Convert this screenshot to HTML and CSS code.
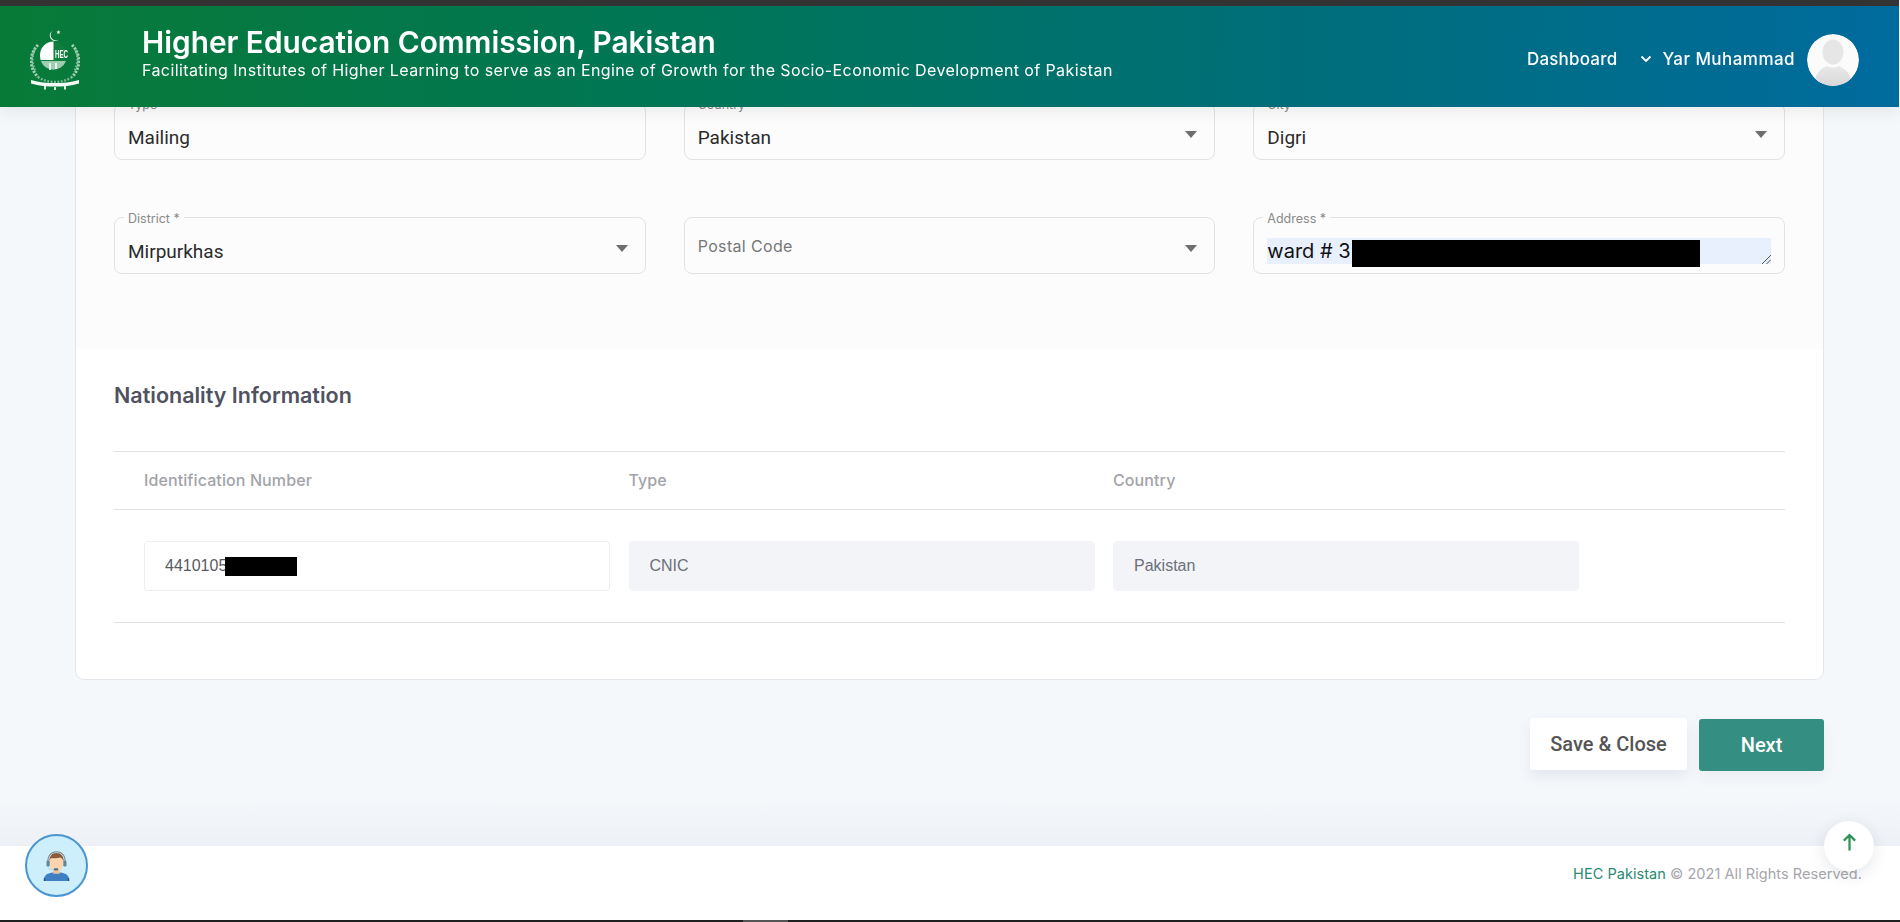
FILE: index.html
```html
<!DOCTYPE html>
<html lang="en">
<head>
<meta charset="utf-8">
<title>Higher Education Commission, Pakistan</title>
<link rel="stylesheet" href="styles.css">
</head>
<body>
<header class="topbar">
  <div class="brand">
    <svg class="logo" viewBox="0 0 50 60" aria-hidden="true">
      <path d="M23 0.500a5.500 5.500 0 1 0 6 9 5 5 0 1 1-6-9z" fill="#fff"/>
      <path d="M28.500 0l.5 1.500 1.500.1-1.200 1 .4 1.500-1.200-.8-1.300.8.4-1.500-1.200-1 1.500-.1z" fill="#fff"/>
      <g fill="none" stroke="#a9d1b8" stroke-width="3" stroke-dasharray="2.200 1.300">
        <path d="M8 15C-1 24-1 38 8 47"/>
        <path d="M42 15c9 9 9 23 0 32"/>
      </g>
      <g fill="none" stroke="#7fbb96" stroke-width="2.400" stroke-dasharray="1.800 1.600">
        <path d="M5 19c-4 8-3 16 1 23"/>
        <path d="M45 19c4 8 3 16-1 23"/>
        <path d="M8 47c5 3.500 11 5 17 5s12-1.500 17-5"/>
      </g>
      <circle cx="23" cy="25" r="13.500" fill="#0f7f3e"/>
      <path d="M23.500 11.500A13.500 13.500 0 0 0 10 25c0 2 .2 3 .6 5h12.900z" fill="#fff"/>
      <path d="M10.800 31H36a13.500 13.500 0 0 1-25.200 0z" fill="#9fcdb1"/>
      <path d="M20 33v7M26 33v6" stroke="#fff" stroke-width="1.500"/>
      <text class="logo-text" x="25" y="28" textLength="13" lengthAdjust="spacingAndGlyphs">HEC</text>
      <path d="M1 50c8 2.500 16 3 24 3s16-.5 24-3v3.500c-8 2.500-16 3-24 3s-16-.5-24-3z" fill="#f4faf6"/>
      <path d="M14 56h2v3.500h-2zM34 56h2v3.500h-2zM24 57h2v3h-2z" fill="#e6f2ea"/>
    </svg>
    <div class="brand-text">
      <h1 class="brand-title">Higher Education Commission, Pakistan</h1>
      <p class="brand-sub">Facilitating Institutes of Higher Learning to serve as an Engine of Growth for the Socio-Economic Development of Pakistan</p>
    </div>
  </div>
  <nav class="usernav">
    <a class="nav-link">Dashboard</a>
    <svg class="chev" viewBox="0 0 12 8" aria-hidden="true"><path d="M1.500 1.500L6 6l4.500-4.500" fill="none" stroke="#fff" stroke-width="1.800"/></svg>
    <span class="nav-user">Yar Muhammad</span>
    <svg class="avatar" viewBox="0 0 52 52" aria-hidden="true">
      <defs>
        <clipPath id="av"><circle cx="26" cy="26" r="26"/></clipPath>
        <linearGradient id="bust" x1="0" y1="0" x2="0" y2="1"><stop offset="0" stop-color="#e9e9e9"/><stop offset="1" stop-color="#d8d8d8"/></linearGradient>
      </defs>
      <g clip-path="url(#av)">
        <rect width="52" height="52" fill="#fbfbfb"/>
        <ellipse cx="26" cy="18" rx="10.500" ry="12.500" fill="#e6e6e6"/>
        <path d="M7 52c0-11 6-17 13-20 4 2 8 2 12 0 7 3 13 9 13 20z" fill="url(#bust)"/>
      </g>
    </svg>
  </nav>
</header>

<main class="page">
  <section class="card">
    <div class="address-block">
      <div class="field-grid">
        <div class="field"><span class="legend">Type</span><span class="value">Mailing</span></div>
        <div class="field"><span class="legend">Country</span><span class="value">Pakistan</span><i class="caret"></i></div>
        <div class="field"><span class="legend">City</span><span class="value">Digri</span><i class="caret"></i></div>
        <div class="field"><span class="legend">District *</span><span class="value">Mirpurkhas</span><i class="caret"></i></div>
        <div class="field"><span class="placeholder">Postal Code</span><i class="caret"></i></div>
        <div class="field"><span class="legend">Address *</span>
          <div class="autofill">
            <span class="ward">ward # 3</span><span class="redact redact-address"></span>
            <svg class="grip" viewBox="0 0 10 10" aria-hidden="true"><path d="M1 10l9-9M5.500 10L10 5.500" stroke="#555" stroke-width="1" fill="none"/></svg>
          </div>
        </div>
      </div>
    </div>
    <div class="nationality">
      <h2 class="section-title">Nationality Information</h2>
      <div class="table-head">
        <span>Identification Number</span><span>Type</span><span>Country</span>
      </div>
      <div class="table-row">
        <div class="cell"><span>4410105</span><span class="redact redact-id"></span></div>
        <div class="cell cell-off">CNIC</div>
        <div class="cell cell-off">Pakistan</div>
      </div>
    </div>
  </section>
  <div class="actions">
    <button class="btn btn-save">Save &amp; Close</button>
    <button class="btn btn-next">Next</button>
  </div>
</main>

<footer class="footer">
  <p class="copyright"><span class="copy-brand">HEC Pakistan</span> © 2021 All Rights Reserved.</p>
</footer>

<button class="support" aria-label="Support">
  <svg viewBox="0 0 32 34" aria-hidden="true">
    <path d="M2 33c0-6 3-8 8-9l6-1 6 1c5 1 8 3 8 9z" fill="#3f7fc4"/>
    <path d="M2 33v-3h1.500v3zM28.500 33v-3H30v3z" fill="#25527f"/>
    <rect x="12.500" y="19" width="7" height="6" fill="#f2c095"/>
    <ellipse cx="16" cy="13" rx="7.500" ry="9" fill="#fbd3ac"/>
    <path d="M8 12C8 5 11 2 16 2s8 3 8 10c-1-3-2-4.500-4-5-3 1-7 1-9 .5-2 .5-2.500 2-3 4.500z" fill="#8b5a36"/>
    <path d="M6.500 13C6 5 10 .8 16 .8S26 5 25.500 13" fill="none" stroke="#7f8a92" stroke-width="1.200"/>
    <rect x="5" y="10.500" width="3.500" height="6.500" rx="1.500" fill="#5f8596"/>
    <rect x="23.500" y="10.500" width="3.500" height="6.500" rx="1.500" fill="#5f8596"/>
    <path d="M6.500 17c0 3 3 3.500 7 3.500" fill="none" stroke="#b8c8cf" stroke-width="1"/>
    <rect x="13" y="19" width="5" height="2.500" rx="1.200" fill="#4d6f7f"/>
  </svg>
</button>
<button class="to-top" aria-label="Back to top">
  <svg viewBox="0 0 16 20" aria-hidden="true"><path d="M8 18.500V2.500M2 8l6-6 6 6" fill="none" stroke="#2e9257" stroke-width="2.400"/></svg>
</button>
<div class="screen-edge"><span class="edge-tab"></span></div>
</body>
</html>
```
FILE: styles.css
```css
* { box-sizing: border-box; }
html, body { margin: 0; height: 922px; overflow: hidden; }
body {
  background: #f5f8fb;
  font-family: Inter, "Liberation Sans", sans-serif;
  color: #333;
  position: relative;
  display: flex;
  flex-direction: column;
}

/* Fixed top bar */
.topbar {
  position: fixed;
  top: 0; left: 0; right: 1px;
  height: 107px;
  z-index: 5;
  border-top: 6px solid #333;
  background: linear-gradient(92deg, #087a37 0%, #007655 35%, #006e7c 70%, #006b9e 100%);
  box-shadow: 0 5px 16px rgba(0, 0, 0, .07);
  display: flex;
  align-items: center;
  justify-content: space-between;
  color: #fff;
}
.brand { display: flex; align-items: center; }
.logo { width: 50px; height: 60px; margin-left: 30px; margin-top: 6px; flex: none; }
.logo-text { font-family: "Liberation Sans", sans-serif; font-size: 11px; font-weight: 700; fill: #fff; }
.brand-text { margin-left: 62px; margin-top: -8px; }
.brand-title {
  margin: 0;
  font-size: 29.800px;
  line-height: 35px;
  font-weight: 560;
  white-space: nowrap;
}
.brand-sub {
  margin: 0;
  font-size: 16px;
  line-height: 20px;
  font-weight: 400;
  letter-spacing: .4px;
  white-space: nowrap;
}
.usernav { display: flex; align-items: center; margin-right: 40px; margin-top: 5px; }
.nav-link, .nav-user { font-size: 17px; font-weight: 550; white-space: nowrap; }
.nav-link { letter-spacing: .2px; }
.nav-user { letter-spacing: .45px; }
.chev { width: 12px; height: 8px; margin-left: 23px; margin-right: 10px; }
.avatar { width: 52px; height: 52px; margin-left: 12px; border-radius: 50%; flex: none; margin-top: 2px; }

/* Page */
.page { height: 846px; padding: 0 76px 0 75px; flex: none; background: linear-gradient(#f5f8fb 0, #f5f8fb 800px, #edf0f5 846px); }
.card {
  height: 680px;
  background: #fff;
  border: 1px solid #e2e5ea;
  border-top: 0;
  border-radius: 0 0 9px 9px;
  overflow: hidden;
}
.address-block {
  height: 349px;
  padding: 103px 38px 0;
  background: #fcfcfc;
}
.field-grid {
  display: grid;
  grid-template-columns: repeat(3, 1fr);
  column-gap: 38px;
  row-gap: 57px;
}
.field {
  position: relative;
  height: 57px;
  padding: 0 13px;
  min-width: 0;
  border: 1px solid #e2e2e2;
  border-radius: 8px;
}
.legend {
  position: absolute;
  left: 9px;
  top: -6px;
  padding: 0 4px;
  font-size: 12.500px;
  line-height: 14px;
  color: #8a8a8a;
  background: #fcfcfc;
}
.value {
  display: block;
  margin-top: 22px;
  font-family: Roboto, sans-serif;
  font-size: 19px;
  line-height: 24px;
  color: #2b2b2b;
}
.placeholder {
  display: block;
  margin-top: 16px;
  font-size: 16px;
  letter-spacing: .35px;
  line-height: 24px;
  color: #777;
}
.caret {
  position: absolute;
  right: 17px;
  top: 27px;
  border-left: 6.500px solid transparent;
  border-right: 6.500px solid transparent;
  border-top: 7px solid #6e6e6e;
}
.autofill {
  position: relative;
  display: flex;
  align-items: flex-start;
  height: 26px;
  margin-top: 20px;
  background: #e8f0fe;
}
.ward { font-size: 20px; line-height: 26px; color: #111; white-space: nowrap; width: 85px; flex: none; }
.redact { display: inline-block; background: #000; }
.redact-address { width: 348px; height: 27px; margin-top: 2px; }
.grip { position: absolute; right: 0; bottom: 0; width: 10px; height: 10px; }

/* Nationality */
.nationality { padding: 0 38px; }
.section-title {
  margin: 0;
  padding-top: 32px;
  height: 102px;
  font-size: 21.500px;
  line-height: 28px;
  font-weight: 600;
  color: #50525f;
}
.table-head, .table-row {
  display: grid;
  grid-template-columns: repeat(3, 466px);
  column-gap: 18.500px;
  padding-left: 30px;
  border-top: 1px solid #dfe2e6;
}
.table-head {
  height: 58px;
  padding-bottom: 2px;
  align-items: center;
  font-size: 16px;
  font-weight: 500;
  letter-spacing: .1px;
  color: #a2a3a8;
}
.table-row {
  height: 114px;
  align-items: center;
  border-bottom: 1px solid #dfe2e6;
}
.cell {
  display: flex;
  align-items: center;
  height: 50px;
  padding-left: 20px;
  border: 1px solid #ebedf2;
  border-radius: 4px;
  font-family: "Liberation Sans", sans-serif;
  font-size: 16px;
  color: #565a63;
}
.cell-off { background: #f3f4f8; border-color: #f3f4f8; color: #6c6f78; }
.redact-id { width: 72px; height: 19px; margin-left: -2px; }

/* Buttons */
.actions {
  display: flex;
  justify-content: flex-end;
  gap: 12px;
  margin-top: 38px;
  align-items: flex-start;
}
.btn {
  height: 52px;
  border: 0;
  border-radius: 3px;
  font-family: Roboto, sans-serif;
  font-size: 20px;
  font-weight: 500;
}
.btn-save { width: 157px; background: #fff; color: #555; box-shadow: 0 6px 14px rgba(40, 60, 90, .09); }
.btn-next { width: 125px; margin-top: 1px; background: #348f82; color: #fff; box-shadow: 0 6px 14px rgba(40, 60, 90, .06); }

/* Footer */
.footer {
  height: 74px;
  flex: none;
  background: #fff;
  padding: 17px 38px 0 0;
  text-align: right;
}
.copyright { margin: 0; font-size: 14.500px; letter-spacing: .05px; line-height: 22px; color: #a6a6ac; white-space: nowrap; }
.copy-brand { color: #2a8a72; }

/* Floating controls */
.support {
  position: fixed;
  left: 25px;
  top: 834px;
  width: 63px;
  height: 63px;
  padding: 0;
  border: 2px solid #4a95cf;
  border-radius: 50%;
  background: #cdeefb;
  display: flex;
  align-items: center;
  justify-content: center;
}
.support svg { width: 29px; height: 31px; margin-top: 1px; }
.to-top {
  position: fixed;
  left: 1824px;
  top: 821px;
  width: 50px;
  height: 50px;
  padding: 0;
  border: 0;
  border-radius: 50%;
  background: #fff;
  box-shadow: 0 4px 16px rgba(40, 60, 90, .12);
  display: flex;
  align-items: center;
  justify-content: center;
}
.to-top svg { width: 15px; height: 19px; margin-bottom: 7px; }
.screen-edge {
  position: fixed;
  left: 0; right: 0; bottom: 0;
  height: 2px;
  background: #1f1f1f;
  padding-left: 743px;
}
.edge-tab { display: block; width: 45px; height: 2px; background: #555; }
```
